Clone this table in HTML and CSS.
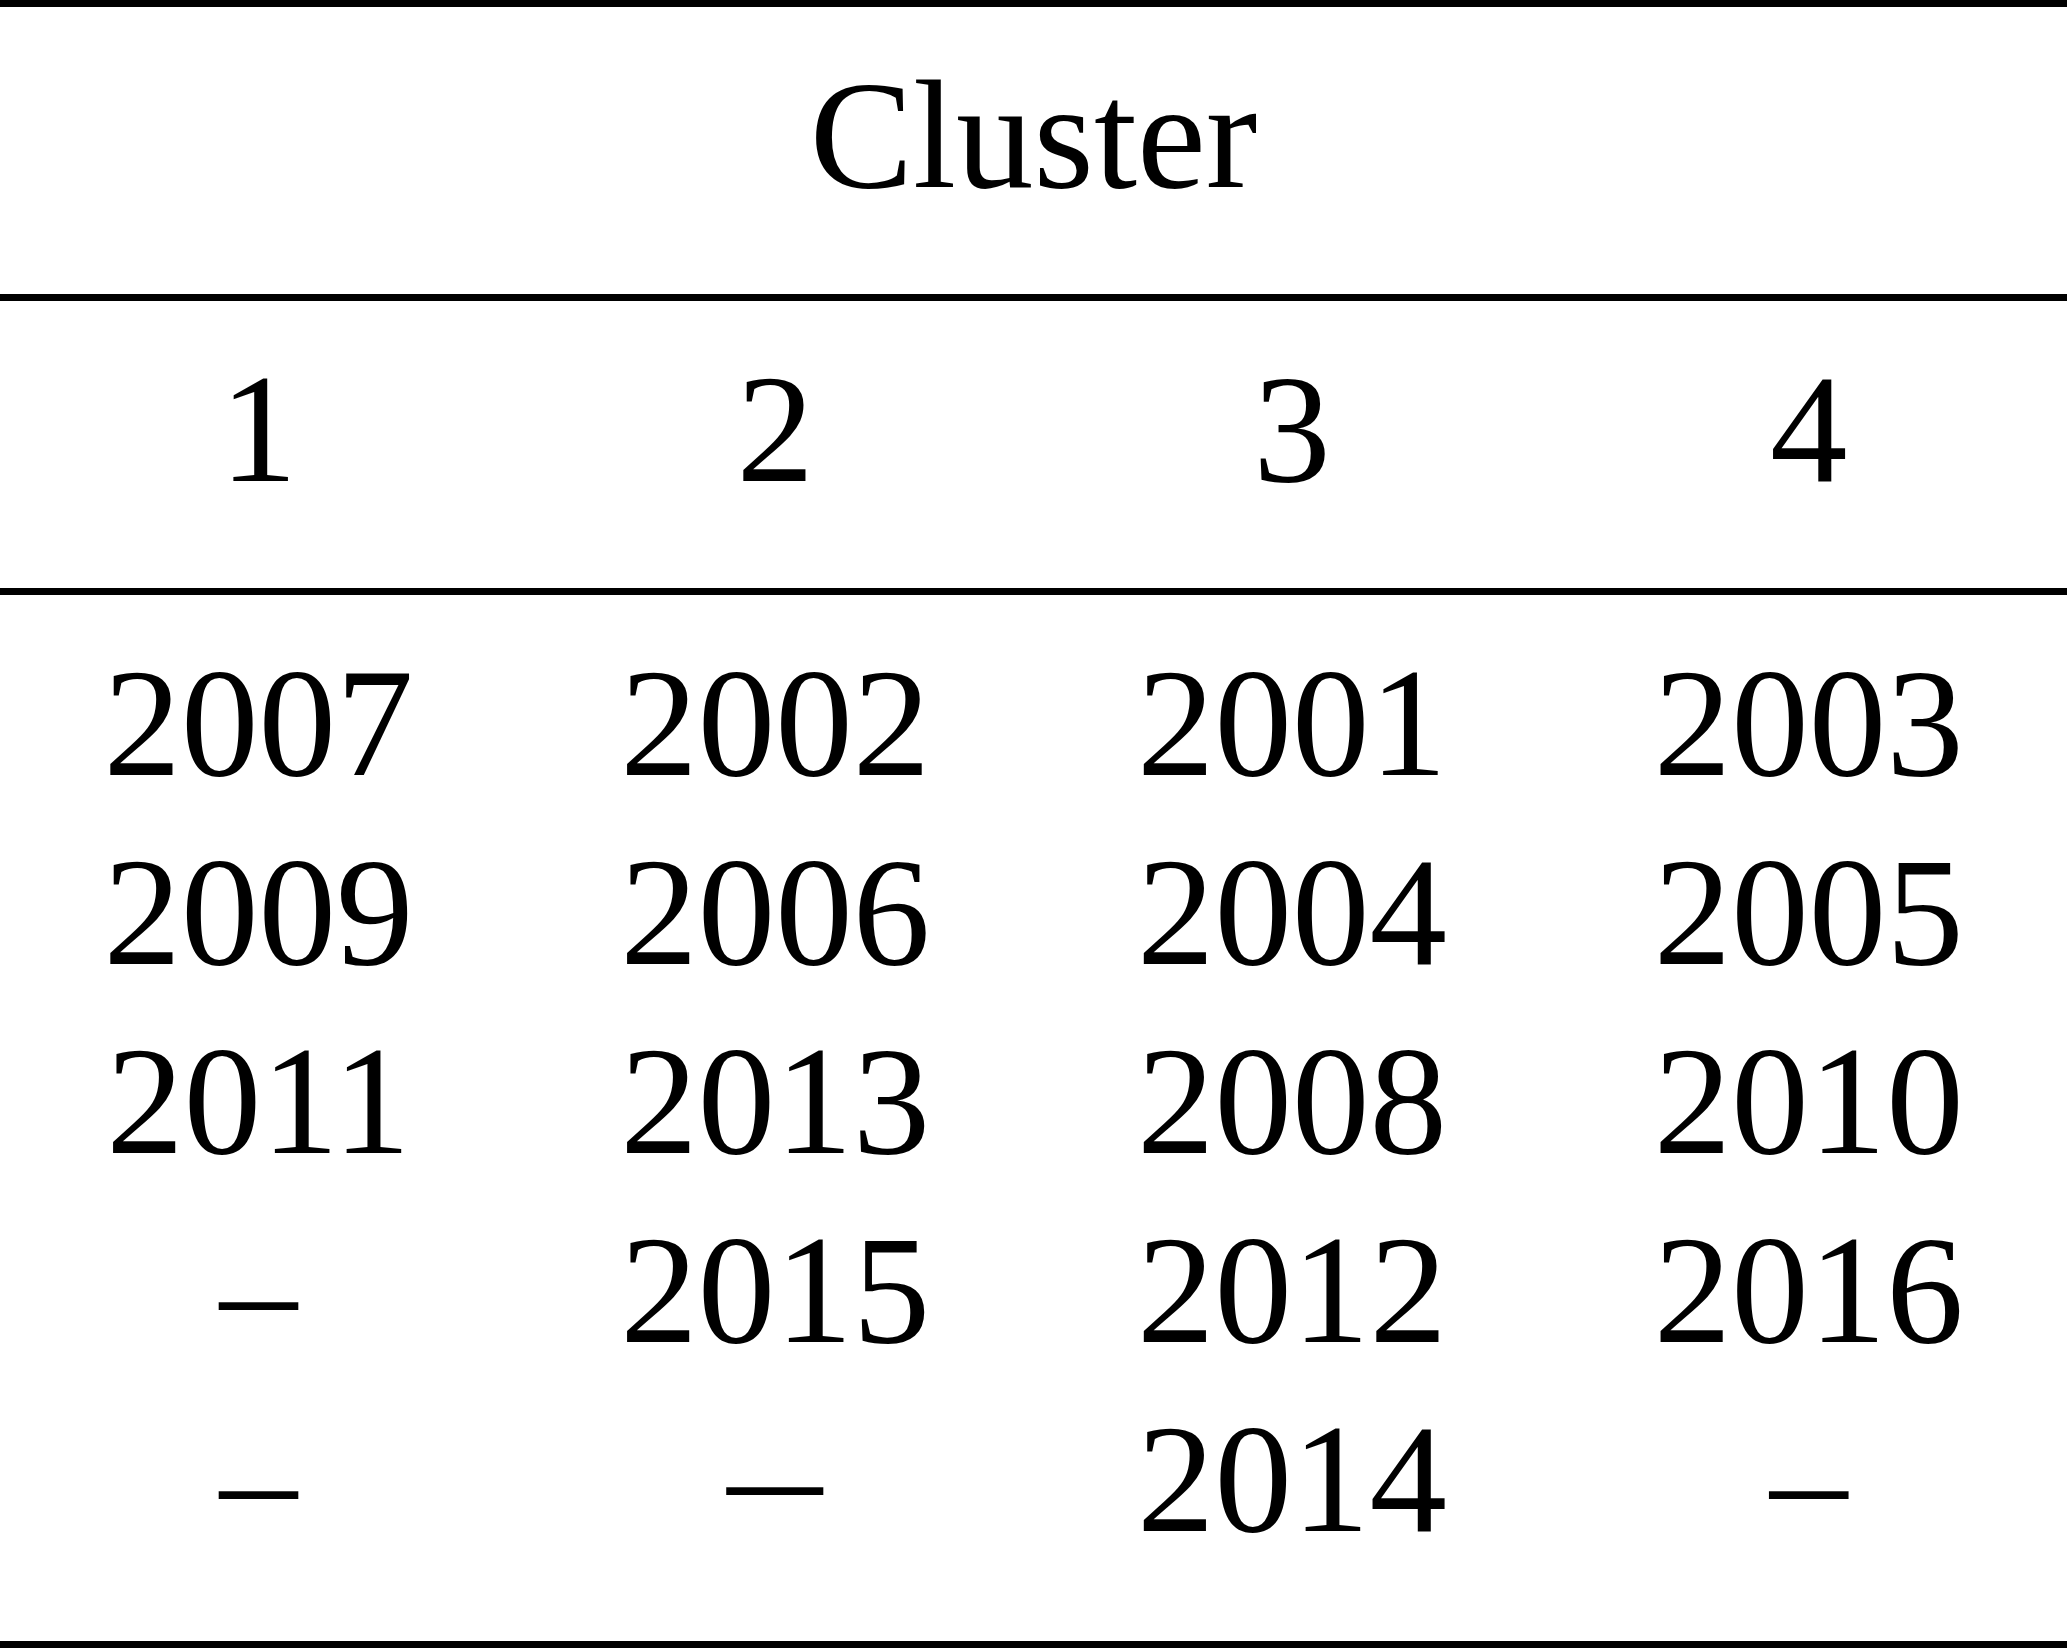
FILE: index.html
```html
<!DOCTYPE html>
<html lang="en">
<head>
  <meta charset="UTF-8">
  <meta name="viewport" content="width=device-width, initial-scale=1.0">
  <link rel="stylesheet" href="styles.css">
</head>
<body>

<table class="clusters">
  <thead>
    <tr class="title-row">
      <th colspan="4">Cluster</th>
    </tr>
    <tr class="num-row">
      <th>1</th>
      <th>2</th>
      <th>3</th>
      <th>4</th>
    </tr>
  </thead>
  <tbody>
    <tr class="first">
      <td>2007</td>
      <td>2002</td>
      <td>2001</td>
      <td>2003</td>
    </tr>
    <tr>
      <td>2009</td>
      <td>2006</td>
      <td>2004</td>
      <td>2005</td>
    </tr>
    <tr>
      <td>2011</td>
      <td>2013</td>
      <td>2008</td>
      <td>2010</td>
    </tr>
    <tr>
      <td>–</td>
      <td>2015</td>
      <td>2012</td>
      <td>2016</td>
    </tr>
    <tr class="last">
      <td>–</td>
      <td><span class="wide-dash">–</span></td>
      <td>2014</td>
      <td>–</td>
    </tr>
  </tbody>
</table>

</body>
</html>
```

FILE: styles.css
```css
body {
  margin: 0;
  background-color: #fff;
  color: #000;
  font-family: 'Liberation Serif', 'Times New Roman', serif;
}

.clusters {
  width: 100%;
  border-collapse: separate;
  border-spacing: 0;
  table-layout: fixed;
}

.clusters th,
.clusters td {
  padding: 0;
  font-size: 155px;
  font-weight: normal;
  line-height: 189px;
  text-align: center;
}

/* header rows: rule above, rule below */
.title-row th {
  border-top: 7px solid #000;
  border-bottom: 7px solid #000;
  padding-top: 34px;
  padding-bottom: 64px;
}

.num-row th {
  border-bottom: 7px solid #000;
  padding-top: 34px;
  padding-bottom: 64px;
}

tbody .first td {
  padding-top: 34px;
}

tbody .last td {
  padding-bottom: 67px;
  border-bottom: 7px solid #000;
}

/* the one dash in column 2 is a bit longer and sits higher */
.wide-dash {
  display: inline-block;
  transform: translateY(-4px) scaleX(1.22);
}
```
